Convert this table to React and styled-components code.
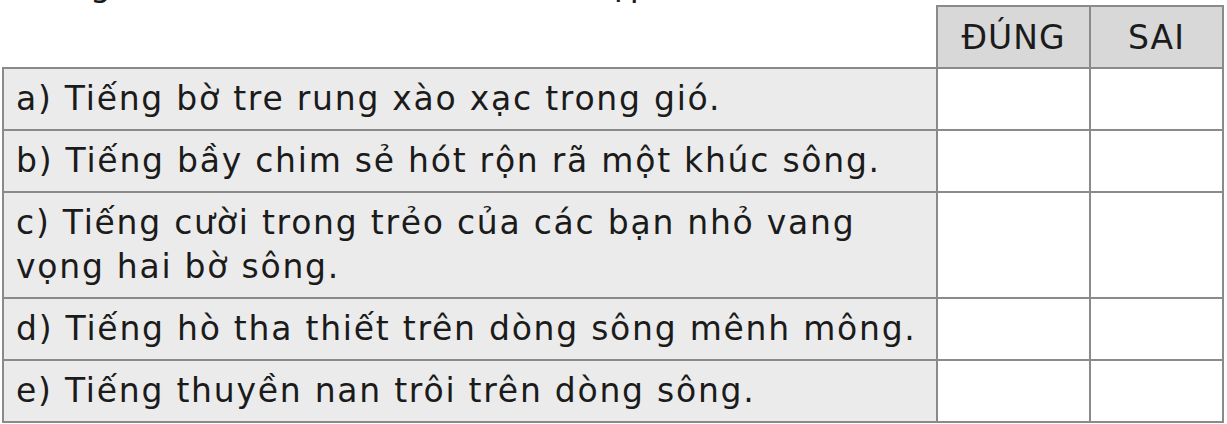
import React from 'react'
import styled, { createGlobalStyle } from 'styled-components'

const GlobalStyle = createGlobalStyle`
    html, body {
        margin: 0;
        padding: 0;
        background: #ffffff;
    }
    body {
        font-family: "DejaVu Sans", "Liberation Sans", sans-serif;
        color: #1b1b1b;
    }
`

const Page = styled.div`
    width: 1227px;
    height: 424px;
    overflow: hidden;
    padding-left: 2px;
    box-sizing: border-box;
`

// only the descenders of the question line are left above the table
const Prompt = styled.div`
    height: 5px;
    overflow: hidden;
    display: flex;
    align-items: flex-end;
    padding-left: 14px;
    font-size: 33px;
    line-height: 40px;
    letter-spacing: 1.2px;
    white-space: nowrap;
`

const Table = styled.table`
    border-collapse: collapse;
    table-layout: fixed;
    width: 1220px;
`

const HeadCell = styled.th`
    height: 60px;
    padding: 0;
    font-weight: normal;
    font-size: 33px;
    letter-spacing: 1px;
    text-align: center;
    vertical-align: middle;
    background: ${props => props.blank ? 'transparent' : '#d8d8d8'};
    border: ${props => props.blank ? 'none' : '2px solid #8a8a8a'};
`

const TextCell = styled.td`
    padding: 8px 10px 8px 12px;
    font-size: 33px;
    line-height: 44px;
    letter-spacing: 1.75px;
    white-space: nowrap;
    background: #ebebeb;
    border: 2px solid #8a8a8a;
    vertical-align: middle;
`

const AnswerCell = styled.td`
    padding: 0;
    background: #ffffff;
    border: 2px solid #8a8a8a;
`

const rows = [
    'a) Tiếng bờ tre rung xào xạc trong gió.',
    'b) Tiếng bầy chim sẻ hót rộn rã một khúc sông.',
    <>c) Tiếng cười trong trẻo của các bạn nhỏ vang<br />vọng hai bờ sông.</>,
    'd) Tiếng hò tha thiết trên dòng sông mênh mông.',
    'e) Tiếng thuyền nan trôi trên dòng sông.',
]

const App = () => {
    return (
        <Page>
            <GlobalStyle />
            <Prompt>Trong bài, đánh dấu vào ô thích hợp.</Prompt>
            <Table>
                <colgroup>
                    <col style={{ width: 934 }} />
                    <col style={{ width: 153 }} />
                    <col style={{ width: 133 }} />
                </colgroup>
                <thead>
                    <tr>
                        <HeadCell blank />
                        <HeadCell>ĐÚNG</HeadCell>
                        <HeadCell>SAI</HeadCell>
                    </tr>
                </thead>
                <tbody>
                    {rows.map((text, i) => (
                        <tr key={i}>
                            <TextCell>{text}</TextCell>
                            <AnswerCell />
                            <AnswerCell />
                        </tr>
                    ))}
                </tbody>
            </Table>
        </Page>
    )
}

export default App
